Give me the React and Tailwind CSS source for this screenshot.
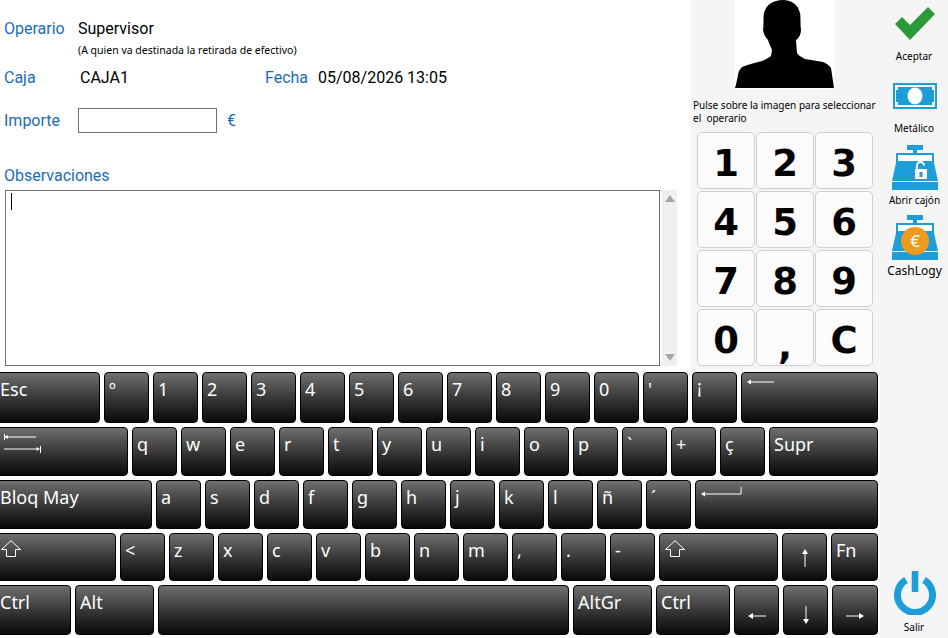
const ROWS = [
  {
    h: 'h-[51px]',
    keys: [
      ['Esc', 'w-[105px]'], ['º'], ['1'], ['2'], ['3'], ['4'], ['5'], ['6'], ['7'], ['8'], ['9'], ['0'], ["'"],
      [<span key="i" className="inline-block -translate-y-[3px]">¡</span>],
      [<BackIcon key="i" />, 'w-[137px]'],
    ],
  },
  {
    h: 'h-[49px]',
    keys: [
      [<TabIcon key="i" />, 'w-[133px]'], ['q'], ['w'], ['e'], ['r'], ['t'], ['y'], ['u'], ['i'], ['o'], ['p'], ['`'], ['+'], ['ç'],
      ['Supr', 'w-[109px]'],
    ],
  },
  {
    h: 'h-[49px]',
    keys: [
      ['Bloq May', 'w-[157px]'], ['a'], ['s'], ['d'], ['f'], ['g'], ['h'], ['j'], ['k'], ['l'], ['ñ'], ['´'],
      [<EnterIcon key="i" />, 'w-[183px]'],
    ],
  },
  {
    h: 'h-[48px]',
    keys: [
      [<ShiftIcon key="i" />, 'w-[121px]'], ['<'], ['z'], ['x'], ['c'], ['v'], ['b'], ['n'], ['m'], [','], ['.'], ['-'],
      [<ShiftIcon key="i" />, 'w-[119px]'],
      [<ArrowIcon key="i" dir="up" />],
      ['Fn', 'w-[47px]'],
    ],
  },
  {
    h: 'h-[50px]',
    keys: [
      ['Ctrl', 'w-[76px]'], ['Alt', 'w-[79px]'], ['', 'w-[411px]'], ['AltGr', 'w-[79px]'], ['Ctrl', 'w-[74px]'],
      [<ArrowIcon key="i" dir="left" />], [<ArrowIcon key="i" dir="down" />], [<ArrowIcon key="i" dir="right" />, 'w-[46px]'],
    ],
  },
]

const PAD = ['1', '2', '3', '4', '5', '6', '7', '8', '9', '0', ',', 'C']

export default function App() {
  return (
    <div className="flex w-[948px] h-[638px] overflow-hidden bg-[#f5f5f5] font-['Noto_Sans',sans-serif] text-black">
      <div className="w-[880px] flex flex-col">
        <div className="flex h-[372px]">
          <Form />
          <Middle />
        </div>
        <Keyboard />
      </div>
      <Toolbar />
    </div>
  )
}

function Form() {
  return (
    <div className="w-[691px] bg-white">
      <div className="flex items-center pl-1 pt-[17px] h-[40px] text-[16px] font-['Roboto',sans-serif]">
        <span className="w-[74px] text-[#1b6cb5]">Operario</span>
        <span>Supervisor</span>
      </div>
      <p className="pl-[78px] mt-[2px] text-[10.5px] leading-[16px]">(A quien va destinada la retirada de efectivo)</p>
      <div className="flex items-center pl-1 mt-[8px] h-[24px] text-[16px] font-['Roboto',sans-serif]">
        <span className="w-[76px] text-[#1b6cb5]">Caja</span>
        <span className="w-[185px]">CAJA1</span>
        <span className="w-[53px] text-[#1b6cb5]">Fecha</span>
        <span>05/08/2026 13:05</span>
      </div>
      <div className="flex items-center pl-1 mt-[18px] h-[25px] text-[16px] font-['Roboto',sans-serif]">
        <span className="w-[74px] text-[#1b6cb5]">Importe</span>
        <div className="w-[139px] h-[25px] border border-[#707070] bg-white" />
        <span className="ml-[10px] text-[#1b6cb5]">€</span>
      </div>
      <div className="pl-1 mt-[31px] h-[23px] text-[16px] font-['Roboto',sans-serif] text-[#1b6cb5]">Observaciones</div>
      <div className="flex mt-[3px] pl-[5px] h-[176px]">
        <div className="w-[655px] border border-[#707070] bg-white pl-[5px] pt-[2px]">
          <div className="w-px h-[17px] bg-black" />
        </div>
        <div className="w-[15px] ml-[2px] bg-[#f0f0f0] flex flex-col items-center justify-between py-[5px]">
          <svg width="10" height="7" viewBox="0 0 10 7"><path d="M5 0 10 7H0z" fill="#a6a6a6" /></svg>
          <svg width="10" height="7" viewBox="0 0 10 7"><path d="M0 0h10L5 7z" fill="#a6a6a6" /></svg>
        </div>
      </div>
    </div>
  )
}

function Middle() {
  return (
    <div className="w-[189px] bg-[#f5f5f5]">
      <div className="w-[100px] h-[89px] ml-[44px] bg-white">
        <svg width="100" height="89" viewBox="0 0 100 89">
          <path
            d="M48 0C38 0 31 5 29 13C28 18 29 24 28 30C29 35 31 38 33 40C34 44 36 47 37 50L36 56C32 59 28 61 23 62C17 64 11 65 7 67C4 70 3 73 3 75C2 80 1 85 0 88L99 88C98 82 97 74 96 68C94 65 91 63 88 62C82 61 76 60 70 59C66 57 63 55 62 53L61 40C64 38 66 34 66 30C65 24 66 18 65 13C63 5 57 0 48 0Z"
            fill="#000"
          />
        </svg>
      </div>
      <p className="ml-[2px] mt-[10px] text-[10px] leading-[13px] whitespace-nowrap">
        Pulse sobre la imagen para seleccionar<br />el&nbsp; operario
      </p>
      <div className="grid grid-cols-[58px_58px_58px] auto-rows-[57px] gap-x-px gap-y-[2px] ml-[6px] mt-[7px]">
        {PAD.map((n) => (
          <div
            key={n}
            className="border border-[#cfcfcf] rounded-[5px] bg-[#fbfbfb] flex items-center justify-center pt-[5px] font-['DejaVu_Sans',sans-serif] font-bold text-[37px] leading-none"
          >
            <span className={n === ',' ? 'translate-y-[6px]' : ''}>{n}</span>
          </div>
        ))}
      </div>
    </div>
  )
}

function Keyboard() {
  return (
    <div className="flex-1 bg-white flex flex-col gap-1 overflow-hidden">
      {ROWS.map((row, i) => (
        <div key={i} className={`flex flex-none gap-1 -ml-[5px] ${row.h}`}>
          {row.keys.map(([label, width], j) => (
            <Key key={j} width={width}>{label}</Key>
          ))}
        </div>
      ))}
      <div className="mt-auto h-[2px] bg-[#2a4a50]" />
    </div>
  )
}

function Key({ width = 'w-[45px]', children }) {
  return (
    <div className={`${width} flex-none h-full border border-black rounded-[4px] bg-gradient-to-b from-[#707070] to-[#0a0a0a] pl-[4px] pt-[4px] text-white text-[18px] leading-[24px]`}>
      {children}
    </div>
  )
}

function BackIcon() {
  return (
    <svg className="block" width="30" height="10" viewBox="0 0 30 10" fill="none">
      <path d="M3 5H28" stroke="#fff" />
      <path d="M1 5 5 2.500V7.500z" fill="#fff" />
    </svg>
  )
}

function TabIcon() {
  return (
    <svg className="block" width="42" height="24" viewBox="0 0 42 24" fill="none">
      <path d="M4 5H36M4 17H38M4.500 2V8M40.500 14V21" stroke="#fff" />
      <path d="M4.500 5 8 3V7zM40 17 36.500 15V19z" fill="#fff" />
    </svg>
  )
}

function EnterIcon() {
  return (
    <svg className="block -mt-[1px]" width="42" height="14" viewBox="0 0 42 14" fill="none">
      <path d="M4 10H41V3" stroke="#fff" />
      <path d="M1 10 5 7.500V12.500z" fill="#fff" />
    </svg>
  )
}

function ShiftIcon() {
  return (
    <svg className="block mt-[2px]" width="22" height="18" viewBox="0 0 22 18" fill="none">
      <path d="M11 .7 20.500 9.500H15.500V16.500H6.500V9.500H1.500z" stroke="#fff" />
    </svg>
  )
}

function ArrowIcon({ dir }) {
  if (dir === 'up') {
    return (
      <svg className="block mx-auto mt-[11px] -translate-x-[2px]" width="8" height="18" viewBox="0 0 8 18" fill="none">
        <path d="M4 2V18" stroke="#fff" /><path d="M4 0 7 5H1z" fill="#fff" />
      </svg>
    )
  }
  if (dir === 'down') {
    return (
      <svg className="block mx-auto mt-[16px] -translate-x-[2px]" width="8" height="18" viewBox="0 0 8 18" fill="none">
        <path d="M4 0V16" stroke="#fff" /><path d="M4 18 7 13H1z" fill="#fff" />
      </svg>
    )
  }
  return (
    <svg className={`block mx-auto mt-[22px] -translate-x-[2px] ${dir === 'right' ? 'rotate-180' : ''}`} width="18" height="8" viewBox="0 0 18 8" fill="none">
      <path d="M2 4H18" stroke="#fff" /><path d="M0 4 5 1V7z" fill="#fff" />
    </svg>
  )
}

function ToolLabel({ className = 'text-[10.5px]', children }) {
  return <div className={`w-full text-center leading-[14px] whitespace-nowrap ${className}`}>{children}</div>
}

function Register({ children }) {
  return (
    <svg width="46" height="45" viewBox="0 0 46 45">
      <path d="M15 0H31V5H25V8H21V5H15z" fill="#1e9ddb" />
      <path d="M4 8H42V18H4z" fill="#1e9ddb" />
      <path d="M6 10H40V16H6z" fill="#fff" />
      <path d="M4 18H42L46 36H0z" fill="#1e9ddb" />
      <path d="M0 37H46V45H0z" fill="#1e9ddb" />
      {children}
    </svg>
  )
}

function Toolbar() {
  return (
    <div className="w-[68px] flex flex-col items-center">
      <svg className="mt-[7px] ml-[2px]" width="40" height="33" viewBox="0 0 40 33">
        <path d="M0 17 7 10 15 18 33 0 40 7 15 33z" fill="#2d9a3a" />
      </svg>
      <ToolLabel className="mt-[9px] text-[10px]">Aceptar</ToolLabel>
      <svg className="mt-[20px] ml-[2px]" width="44" height="26" viewBox="0 0 44 26">
        <path d="M0 0H44V26H0z" fill="#1e9ddb" />
        <path d="M2 2H42V24H2z" fill="#fff" />
        <path d="M5 4H39V7H41V19H39V22H5V19H3V7H5z" fill="#1e9ddb" />
        <ellipse cx="22" cy="13" rx="7.500" ry="8.500" fill="#fff" />
      </svg>
      <ToolLabel className="mt-[12px] text-[10px]">Metálico</ToolLabel>
      <div className="mt-[10px] ml-[2px] h-[45px]">
        <Register>
          <path d="M23 24H35V34H23z" fill="#fff" />
          <path d="M25 24V20.500A3.500 3.500 0 0 1 32 20.500" fill="none" stroke="#fff" strokeWidth="2" />
          <path d="M27.500 27H30.500V32H27.500z" fill="#1e9ddb" />
        </Register>
      </div>
      <ToolLabel className="mt-[3px] text-[10px] ml-[1px]">Abrir cajón</ToolLabel>
      <div className="mt-[8px] ml-[2px] h-[45px]">
        <Register>
          <circle cx="23" cy="26" r="14" fill="#ee9a1c" />
          <text x="23" y="32" textAnchor="middle" fontSize="17" fill="#fff" fontFamily="Noto Sans">€</text>
        </Register>
      </div>
      <ToolLabel className="mt-[4px] text-[12px] ml-[1px]">CashLogy</ToolLabel>
      <svg className="mt-auto ml-[2px]" width="44" height="44" viewBox="0 0 44 44" fill="none">
        <path d="M13 9A17.500 17.500 0 1 0 31 9" stroke="#1e9ddb" strokeWidth="7" />
        <path d="M18.700 0H25.300V21H18.700z" fill="#1e9ddb" />
      </svg>
      <ToolLabel className="mt-[5px] mb-[4px] text-[10px]">Salir</ToolLabel>
    </div>
  )
}
